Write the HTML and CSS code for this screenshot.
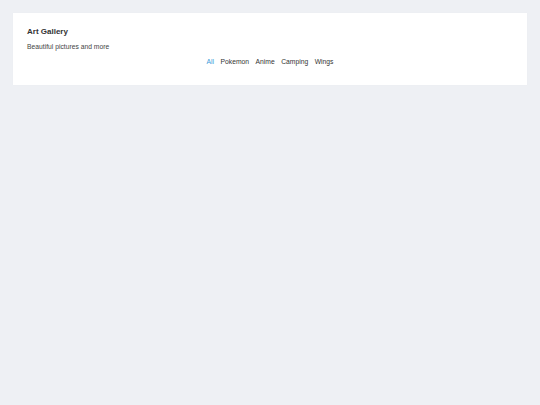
FILE: index.html
```html
<!DOCTYPE html>
<html>
<head>
<meta charset="utf-8">
<link rel="stylesheet" href="styles.css">
</head>
<body>
<div class="page">
  <header class="card">
    <h1 class="title">Art Gallery</h1>
    <p class="subtitle">Beautiful pictures and more</p>
    <nav class="filters">
      <a class="filter active">All</a>
      <a class="filter">Pokemon</a>
      <a class="filter">Anime</a>
      <a class="filter">Camping</a>
      <a class="filter">Wings</a>
    </nav>
  </header>
</div>
</body>
</html>
```

FILE: styles.css
```css
html, body {
  margin: 0;
  padding: 0;
  background: #eef0f4;
  font-family: "Liberation Sans", Arial, sans-serif;
  height: 100%;
}
.page {
  padding: 13px;
}
.card {
  background: #ffffff;
  padding: 14px 14px 19px 14px;
  box-shadow: 0 0 1px rgba(0,0,0,0.04);
}
.title {
  margin: 0;
  font-size: 8px;
  line-height: 10px;
  font-weight: bold;
  color: #333333;
}
.subtitle {
  margin: 5px 0 0 0;
  font-size: 6.75px;
  line-height: 9px;
  color: #444444;
}
.filters {
  margin-top: 6px;
  display: flex;
  justify-content: center;
  gap: 6.5px;
  font-size: 6.75px;
  line-height: 9px;
}
.filter {
  color: #333333;
  text-decoration: none;
}
.filter.active {
  color: #3a9ad9;
}
```
